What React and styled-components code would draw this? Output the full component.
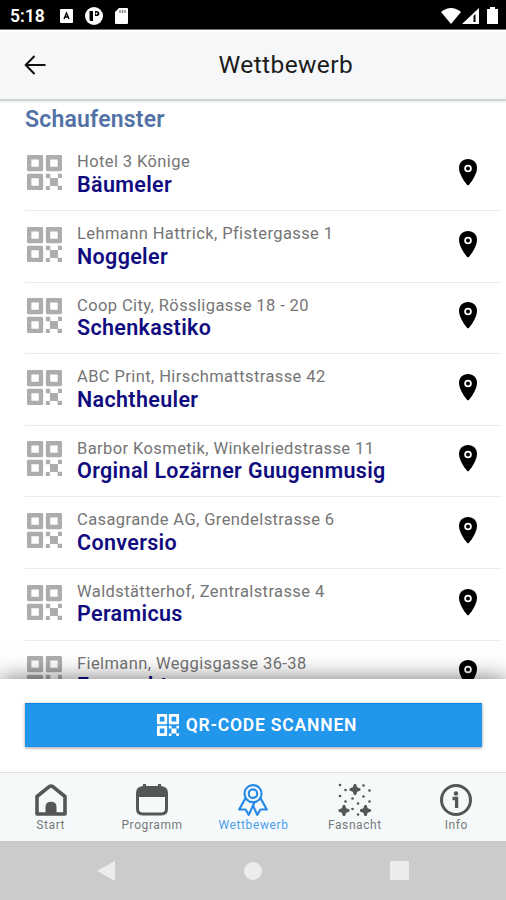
import React from 'react';
import styled, { createGlobalStyle } from 'styled-components';
import { IoRibbonOutline } from 'react-icons/io5';

const GlobalStyle = createGlobalStyle`
  * {
    box-sizing: border-box;
  }

  body {
    margin: 0;
    background: #ffffff;
    font-family: Roboto, 'Liberation Sans', sans-serif;
  }

  svg {
    display: block;
    flex-shrink: 0;
  }
`;

const Screen = styled.div`
  display: flex;
  flex-direction: column;
  width: 506px;
  height: 900px;
  overflow: hidden;
  background: #ffffff;
`;

const StatusBar = styled.div`
  display: flex;
  align-items: center;
  justify-content: space-between;
  height: 30px;
  padding: 2px 8px 0 10px;
  background: #000000;
  border-bottom: 1px solid #777777;
  color: #ffffff;
  flex-shrink: 0;
`;

const StatusGroup = styled.div`
  display: flex;
  align-items: center;
  gap: ${({ $gap }) => $gap}px;
`;

const Clock = styled.span`
  width: 38px;
  font-size: 17.5px;
  font-weight: 600;
`;

const Header = styled.header`
  display: grid;
  grid-template-columns: 66px 1fr;
  align-items: center;
  height: 71px;
  padding: 0 0 2px;
  background: #f5f7f9;
  border-top: 2px solid #ffffff;
  border-bottom: 2px solid #d0d5d6;
  box-shadow: 0 1px 2px rgba(0, 0, 0, 0.1);
  flex-shrink: 0;
`;

const BackButton = styled.button`
  display: flex;
  padding: 1px 0 0 24px;
  background: none;
  border: none;
  color: #111111;
`;

const Title = styled.h1`
  margin: 0;
  padding-left: 152.5px;
  color: #1c1c1c;
  font-size: 24.5px;
  font-weight: 400;
  letter-spacing: 0.4px;
`;

const Content = styled.main`
  flex: 1;
  min-height: 0;
  overflow: hidden;
  padding: 4px 4px 0 25px;
`;

const SectionTitle = styled.h2`
  margin: 0;
  height: 34.5px;
  color: #5272a6;
  font-size: 23px;
  font-weight: 600;
  line-height: 29px;
  letter-spacing: 0.2px;
`;

const Row = styled.div`
  display: flex;
  height: 71.6px;
  padding: 15.5px 0 0 2px;
  border-bottom: 1.5px solid #ebeced;
`;

const QrBox = styled.div`
  color: #adadad;
`;

const RowText = styled.div`
  flex: 1;
  padding-left: 15px;
  white-space: nowrap;
`;

const Place = styled.div`
  margin-top: -2.6px;
  height: 20px;
  color: #757575;
  font-size: 16.5px;
  line-height: 20px;
  letter-spacing: 0.4px;
`;

const Name = styled.div`
  margin-top: -0.5px;
  color: #100c80;
  font-size: 21.5px;
  font-weight: 600;
  line-height: 25px;
  letter-spacing: 0.34px;
`;

const PinBox = styled.div`
  padding: 4px 25px 0 0;
`;

const ScanPanel = styled.section`
  position: relative;
  height: 93px;
  padding: 24px 24px 0 25px;
  background: #ffffff;
  box-shadow: 0 0 22px rgba(0, 0, 0, 0.55);
  flex-shrink: 0;
`;

const ScanButton = styled.button`
  display: flex;
  align-items: center;
  justify-content: center;
  gap: 7px;
  width: 100%;
  height: 44px;
  padding: 0 0 1px 7px;
  background: #2196eb;
  border: none;
  border-top: 1px solid #0d83df;
  box-shadow: 0 1px 3px rgba(0, 0, 0, 0.4);
  color: #ffffff;
  font-family: inherit;
  font-size: 17.5px;
  font-weight: 600;
  letter-spacing: 0.8px;
`;

const TabBar = styled.nav`
  position: relative;
  display: grid;
  grid-template-columns: repeat(5, 1fr);
  height: 69px;
  margin-right: -1px;
  background: #f6f9fa;
  border-top: 1px solid #dfe2e3;
  flex-shrink: 0;
`;

const Tab = styled.a`
  display: flex;
  flex-direction: column;
  align-items: center;
  padding-top: 10px;
  color: ${({ $active }) => ($active ? '#2589e8' : '#555657')};
`;

const TabLabel = styled.span`
  margin-top: 1px;
  color: ${({ $active }) => ($active ? '#4b9eee' : '#77797a')};
  font-size: 12px;
  line-height: 14px;
  letter-spacing: 0.6px;
`;

const SystemNav = styled.div`
  display: flex;
  align-items: center;
  justify-content: space-between;
  height: 59px;
  padding: 0 97px;
  background: #cbcbcb;
  color: #ececec;
  flex-shrink: 0;
`;

function QrIcon({ size }) {
  return (
    <svg width={size} height={size} viewBox='0 0 104 104' fill='currentColor'>
      <path
        fillRule='evenodd'
        d='M4 0H44Q48 0 48 4V44Q48 48 44 48H4Q0 48 0 44V4Q0 0 4 0ZM13 13V35H35V13ZM60 0H100Q104 0 104 4V44Q104 48 100 48H60Q56 48 56 44V4Q56 0 60 0ZM69 13V35H91V13ZM4 56H44Q48 56 48 60V100Q48 104 44 104H4Q0 104 0 100V60Q0 56 4 56ZM13 69V91H35V69Z'
      />
      <rect x='56' y='56' width='13' height='13' rx='1' />
      <rect x='68' y='68' width='24' height='24' rx='1' />
      <rect x='92' y='56' width='12' height='12' rx='1' />
      <rect x='56' y='92' width='12' height='12' rx='1' />
      <rect x='91' y='91' width='13' height='13' rx='1' />
    </svg>
  );
}

function PinIcon() {
  return (
    <svg width='18' height='27' viewBox='0 0 18 27'>
      <path d='M9 0C3.8 0 0 3.8 0 8.7C0 14.5 4.5 21.5 8 25.8Q9 26.800 10 25.8C13.5 21.5 18 14.5 18 8.7C18 3.8 14.2 0 9 0Z' fill='#000000' />
      <circle cx='9' cy='9.5' r='2.9' fill='none' stroke='#ffffff' strokeWidth='1.8' />
    </svg>
  );
}

function HomeIcon() {
  return (
    <svg width='34' height='34' viewBox='0 0 34 34'>
      <path d='M3 31V13.5L15.2 3.7Q17 2.3 18.8 3.7L31 13.5V31Z' fill='none' stroke='currentColor' strokeWidth='3.6' strokeLinejoin='round' />
      <path d='M11.5 32V24Q11.5 18.8 17 18.8T22.5 24V32Z' fill='currentColor' />
    </svg>
  );
}

function CalendarIcon() {
  return (
    <svg width='34' height='34' viewBox='0 0 34 34' fill='currentColor'>
      <path
        fillRule='evenodd'
        d='M8 1H11V3H23V1H26V3Q33 3.5 33 10V26Q33 32.5 26 32.5H8Q1 32.5 1 26V10Q1 3.5 8 3ZM4 14V26Q4 29.5 8 29.5H26Q30 29.5 30 26V14Z'
      />
    </svg>
  );
}

const confetti = [
  [2, 2],
  [7.5, 7],
  [2, 13],
  [7.5, 18.5],
  [14.5, 15.5],
  [20, 20.5],
  [25.5, 2.5],
  [31.5, 7.5],
  [25.5, 13.5],
  [31.5, 18.5],
  [14.5, 26],
  [20, 31.5],
];

const stars = [
  [17, 6.5],
  [6, 27.5],
  [27.5, 27.5],
];

function SparkleIcon() {
  return (
    <svg width='34' height='34' viewBox='0 0 34 34' fill='currentColor'>
      {confetti.map(([x, y]) => (
        <circle key={`${x}-${y}`} cx={x} cy={y} r='1.3' />
      ))}
      {stars.map(([x, y]) => (
        <path key={x} transform={`translate(${x} ${y})`} d='M-1-5.5H1L2.200-2.2L5.5-1V1L2.2 2.2L1 5.5H-1L-2.2 2.2L-5.5 1V-1L-2.2-2.2Z' />
      ))}
    </svg>
  );
}

function InfoIcon() {
  return (
    <svg width='34' height='34' viewBox='0 0 34 34'>
      <circle cx='17' cy='17' r='14.5' fill='none' stroke='currentColor' strokeWidth='3' />
      <circle cx='17' cy='10.5' r='2.2' fill='currentColor' />
      <path d='M13.5 15.5H17.6V25' fill='none' stroke='currentColor' strokeWidth='3.3' />
    </svg>
  );
}

const entries = [
  { place: 'Hotel 3 Könige', name: 'Bäumeler' },
  { place: 'Lehmann Hattrick, Pfistergasse 1', name: 'Noggeler' },
  { place: 'Coop City, Rössligasse 18 - 20', name: 'Schenkastiko' },
  { place: 'ABC Print, Hirschmattstrasse 42', name: 'Nachtheuler' },
  { place: 'Barbor Kosmetik, Winkelriedstrasse 11', name: 'Orginal Lozärner Guugenmusig' },
  { place: 'Casagrande AG, Grendelstrasse 6', name: 'Conversio' },
  { place: 'Waldstätterhof, Zentralstrasse 4', name: 'Peramicus' },
  { place: 'Fielmann, Weggisgasse 36-38', name: 'Fasnachter' },
];

const tabs = [
  { label: 'Start', icon: <HomeIcon /> },
  { label: 'Programm', icon: <CalendarIcon /> },
  { label: 'Wettbewerb', icon: <IoRibbonOutline size={34} />, active: true },
  { label: 'Fasnacht', icon: <SparkleIcon /> },
  { label: 'Info', icon: <InfoIcon /> },
];

function App() {
  return (
    <Screen>
      <GlobalStyle />
      <StatusBar>
        <StatusGroup $gap={12}>
          <Clock>5:18</Clock>
          <svg width='13' height='14' viewBox='0 0 13 14'>
            <rect width='13' height='14' rx='1' fill='#ffffff' />
            <path d='M4 10L6.5 4L9 10M5 8H8' fill='none' stroke='#000000' strokeWidth='1.4' />
          </svg>
          <svg width='18' height='18' viewBox='0 0 18 18'>
            <circle cx='9' cy='9' r='9' fill='#ffffff' />
            <path d='M4.5 4H8V14H5.5Q4.5 14 4.5 12ZM10 4H12Q14.5 4.5 14.5 7Q14 9 12 9H10Z' fill='#000000' />
            <circle cx='11.5' cy='6.5' r='1' fill='#ffffff' />
          </svg>
          <svg width='13' height='16' viewBox='0 0 13 16'>
            <path d='M4 0H12Q13 0 13 1V15Q13 16 12 16H1Q0 16 0 15V4Z' fill='#ffffff' />
            <path d='M5 2V5M7.5 2V5M10 2V5' stroke='#777777' strokeWidth='1.3' />
          </svg>
        </StatusGroup>
        <StatusGroup $gap={1}>
          <svg width='20' height='16' viewBox='0 0 20 16'>
            <path d='M0 4Q10-4 20 4L10 16Z' fill='#ffffff' />
          </svg>
          <svg width='17' height='16' viewBox='0 0 17 16'>
            <path d='M17 0V16H0Z' fill='#ffffff' />
            <path d='M11.5 8L13.5 6V14H11.5Z' fill='#000000' />
          </svg>
          <svg width='18' height='17' viewBox='0 0 18 17'>
            <path d='M10 0H15V2H18V17H7V2H10Z' fill='#ffffff' />
          </svg>
        </StatusGroup>
      </StatusBar>
      <Header>
        <BackButton aria-label='Zurück'>
          <svg width='22' height='20' viewBox='0 0 22 20'>
            <path d='M10.5 1L1.7 10L10.5 19M2 10H21.5' fill='none' stroke='currentColor' strokeWidth='2' />
          </svg>
        </BackButton>
        <Title>Wettbewerb</Title>
      </Header>
      <Content>
        <SectionTitle>Schaufenster</SectionTitle>
        {entries.map(({ place, name }) => (
          <Row key={name}>
            <QrBox>
              <QrIcon size={35} />
            </QrBox>
            <RowText>
              <Place>{place}</Place>
              <Name>{name}</Name>
            </RowText>
            <PinBox>
              <PinIcon />
            </PinBox>
          </Row>
        ))}
      </Content>
      <ScanPanel>
        <ScanButton>
          <QrIcon size={22} />
          QR-CODE SCANNEN
        </ScanButton>
      </ScanPanel>
      <TabBar>
        {tabs.map(({ label, icon, active }) => (
          <Tab key={label} $active={active}>
            {icon}
            <TabLabel $active={active}>{label}</TabLabel>
          </Tab>
        ))}
      </TabBar>
      <SystemNav>
        <svg width='18' height='20' viewBox='0 0 18 20' fill='currentColor'>
          <path d='M18 0V20L0 10Z' />
        </svg>
        <svg width='18' height='18' viewBox='0 0 18 18' fill='currentColor'>
          <circle cx='9' cy='9' r='9' />
        </svg>
        <svg width='19' height='19' viewBox='0 0 19 19' fill='currentColor'>
          <rect width='19' height='19' rx='1' />
        </svg>
      </SystemNav>
    </Screen>
  );
}

export default App;
